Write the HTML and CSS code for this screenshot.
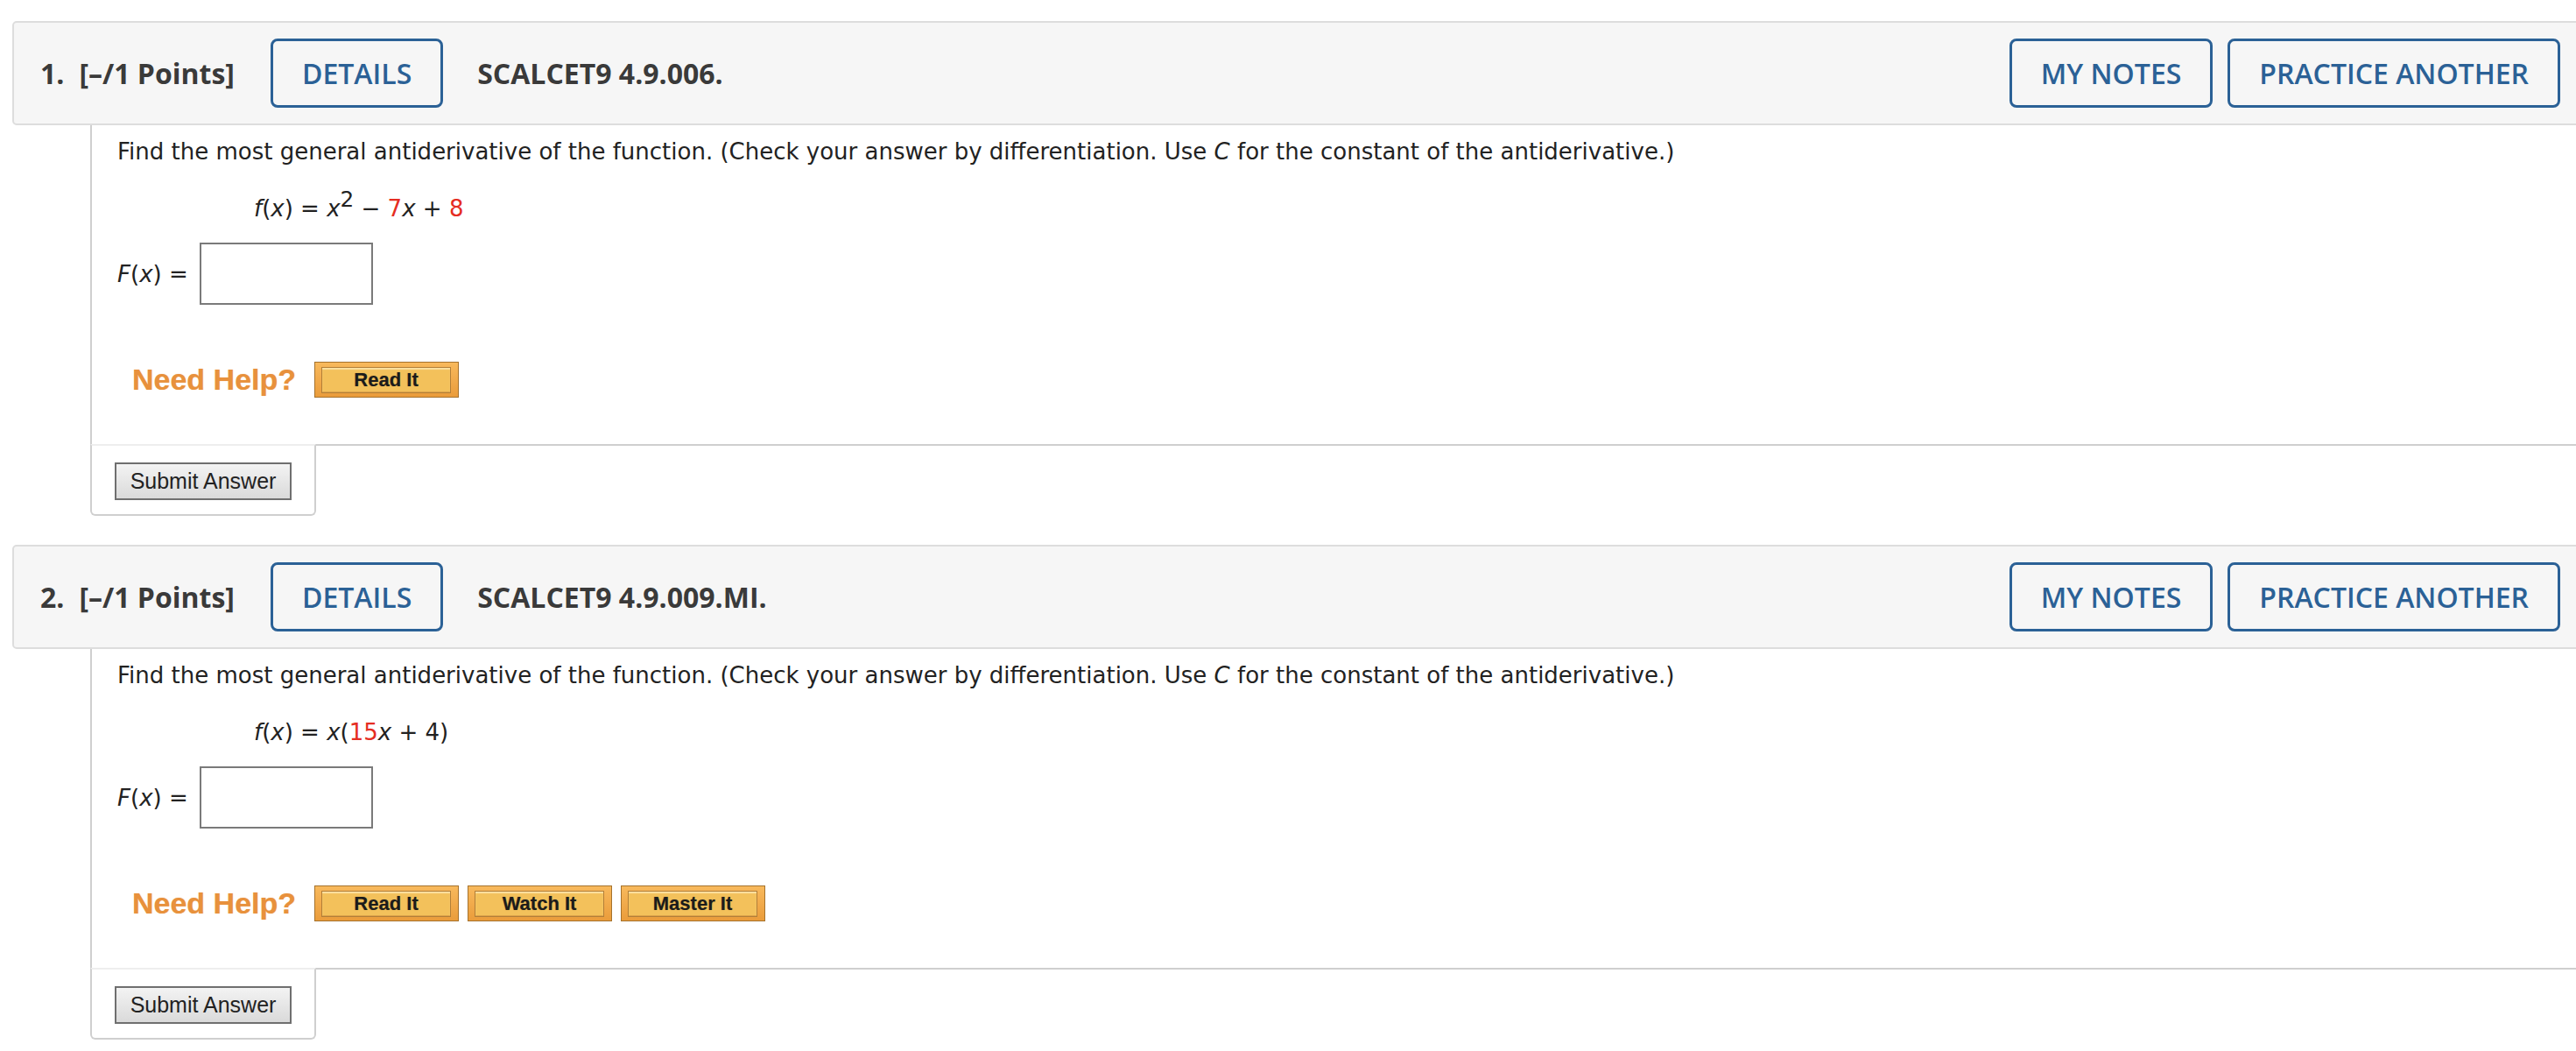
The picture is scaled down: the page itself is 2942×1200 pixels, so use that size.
FILE: index.html
```
<!DOCTYPE html>
<html lang="en">
<head>
<meta charset="utf-8">
<title>Questions</title>
<link rel="stylesheet" href="styles.css">
</head>
<body>
<div class="page">

  <div class="question">
    <div class="qhead">
      <span class="qnum">1.</span>
      <span class="pts">[–/1 Points]</span>
      <button class="hbtn details">DETAILS</button>
      <span class="qid">SCALCET9 4.9.006.</span>
      <button class="hbtn notes">MY NOTES</button>
      <button class="hbtn practice">PRACTICE ANOTHER</button>
    </div>
    <div class="qbody">
      <p class="prompt">Find the most general antiderivative of the function. (Check your answer by differentiation. Use <i>C</i> for the constant of the antiderivative.)</p>
      <p class="formula"><i>f</i>(<i>x</i>) = <i>x</i><sup>2</sup> − <span class="red">7</span><i>x</i> + <span class="red">8</span></p>
      <div class="answer">
        <span class="label"><i>F</i>(<i>x</i>) =</span>
        <span class="inputbox"></span>
      </div>
      <div class="help">
        <span class="needhelp">Need Help?</span>
        <span class="hb"><span class="hbi">Read It</span></span>
      </div>
    </div>
    <div class="submitrow">
      <div class="submittab"><button class="submit">Submit Answer</button></div>
      <div class="rest"></div>
    </div>
  </div>

  <div class="question q2">
    <div class="qhead">
      <span class="qnum">2.</span>
      <span class="pts">[–/1 Points]</span>
      <button class="hbtn details">DETAILS</button>
      <span class="qid">SCALCET9 4.9.009.MI.</span>
      <button class="hbtn notes">MY NOTES</button>
      <button class="hbtn practice">PRACTICE ANOTHER</button>
    </div>
    <div class="qbody">
      <p class="prompt">Find the most general antiderivative of the function. (Check your answer by differentiation. Use <i>C</i> for the constant of the antiderivative.)</p>
      <p class="formula"><i>f</i>(<i>x</i>) = <i>x</i>(<span class="red">15</span><i>x</i> + 4)</p>
      <div class="answer">
        <span class="label"><i>F</i>(<i>x</i>) =</span>
        <span class="inputbox"></span>
      </div>
      <div class="help">
        <span class="needhelp">Need Help?</span>
        <span class="hb"><span class="hbi">Read It</span></span>
        <span class="hb"><span class="hbi">Watch It</span></span>
        <span class="hb"><span class="hbi">Master It</span></span>
      </div>
    </div>
    <div class="submitrow">
      <div class="submittab"><button class="submit">Submit Answer</button></div>
      <div class="rest"></div>
    </div>
  </div>

</div>
</body>
</html>
```
FILE: styles.css
```
html, body {
  margin: 0;
  padding: 0;
  background: #ffffff;
  overflow: hidden;
}

.page {
  padding: 24px 0 0 14px;
}

.question {
  width: 2948px;
}

.q2 {
  margin-top: 33px;
}

/* ---------- header bar ---------- */
.qhead {
  display: flex;
  align-items: center;
  box-sizing: border-box;
  height: 119px;
  border: 2px solid #dddddd;
  border-radius: 5px;
  background: #f6f6f6;
  padding: 0 36px 0 30px;
  font-family: "Open Sans", "DejaVu Sans", sans-serif;
  color: #3a3a3a;
}

.qnum,
.pts,
.qid {
  font-size: 32px;
  font-weight: 700;
  white-space: nowrap;
}

.pts {
  margin-left: 17px;
}

.qid {
  margin-left: 39px;
}

.hbtn {
  display: flex;
  align-items: center;
  box-sizing: border-box;
  height: 79px;
  margin: 0;
  padding: 0 33px;
  border: 3px solid #2b6196;
  border-radius: 8px;
  background: transparent;
  color: #2b6196;
  font-family: "Open Sans", "DejaVu Sans", sans-serif;
  font-size: 32px;
  font-weight: 600;
  white-space: nowrap;
}

.details {
  margin-left: 41px;
}

.notes {
  margin-left: auto;
}

.practice {
  margin-left: 17px;
}

/* ---------- question body ---------- */
.qbody {
  margin: 0 20px 0 89px;
  border-left: 2px solid #cfcfcf;
  padding: 15px 0 53px 29px;
  font-family: "DejaVu Sans", Verdana, sans-serif;
  font-size: 26px;
  color: #222222;
}

.prompt {
  margin: 0;
  line-height: 30px;
  white-space: nowrap;
}

.formula {
  margin: 35px 0 0 156px;
  line-height: 30px;
}

.formula sup {
  font-size: 0.95em;
  vertical-align: baseline;
  position: relative;
  top: -0.45em;
  line-height: 0;
}

.red {
  color: #e52d22;
}

.answer {
  display: flex;
  align-items: center;
  margin-top: 24px;
}

.label {
  line-height: 30px;
  white-space: nowrap;
}

.inputbox {
  display: block;
  box-sizing: border-box;
  width: 198px;
  height: 71px;
  margin-left: 13px;
  border: 2px solid #7a7a7a;
  background: #ffffff;
}

.help {
  display: flex;
  align-items: center;
  margin-top: 65px;
  padding-left: 17px;
}

.needhelp {
  font-family: "Liberation Sans", Arial, sans-serif;
  font-weight: 700;
  font-size: 34px;
  line-height: 41px;
  color: #e8913c;
  text-shadow: 0 0 1px rgba(232, 145, 60, 0.6);
  margin-right: 21px;
  white-space: nowrap;
}

.hb {
  display: block;
  box-sizing: border-box;
  width: 165px;
  height: 41px;
  margin-right: 10px;
  border: 1px solid #a5722d;
  background: linear-gradient(#f8b95c, #ea9c3b);
  padding: 5px 8px 4px 7px;
}

.hbi {
  display: flex;
  align-items: center;
  justify-content: center;
  box-sizing: border-box;
  height: 100%;
  border: 1px solid #b27f38;
  background: #f3c15b;
  box-shadow: inset 0 2px 1px #fbe0a0, inset 0 -1px 0 #dca24a;
  font-family: "Liberation Sans", Arial, sans-serif;
  font-weight: 700;
  font-size: 22px;
  color: #1b1b1b;
  text-shadow: 0 0 1px rgba(0, 0, 0, 0.35);
  white-space: nowrap;
}

/* ---------- submit row ---------- */
.submitrow {
  display: flex;
  margin: 0 20px 0 89px;
}

.submittab {
  box-sizing: border-box;
  width: 258px;
  border: 2px solid #cfcfcf;
  border-top: 2px solid #eeeeee;
  border-radius: 0 0 6px 6px;
  padding: 19px 0 16px 26px;
}

.rest {
  flex: 1;
  border-top: 2px solid #cfcfcf;
}

.submit {
  display: block;
  box-sizing: border-box;
  width: 202px;
  height: 43px;
  margin: 0;
  padding: 0;
  border: 2px solid #6f6f6f;
  background: linear-gradient(#f3f3f3, #dadada);
  font-family: "Liberation Sans", Arial, sans-serif;
  font-size: 25px;
  color: #222222;
  white-space: nowrap;
}
```
